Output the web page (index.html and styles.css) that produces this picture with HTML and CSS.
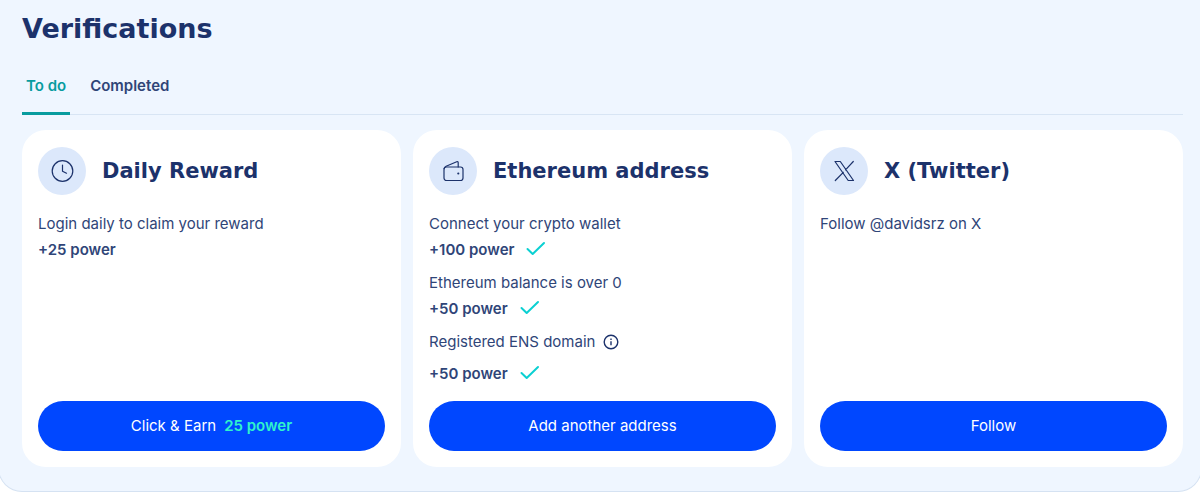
FILE: index.html
```html
<!DOCTYPE html>
<html lang="en">
<head>
<meta charset="utf-8">
<meta name="viewport" content="width=device-width, initial-scale=1">
<title>Verifications</title>
<link rel="stylesheet" href="styles.css">
</head>
<body>
<main class="panel">
  <h1 class="title">Verifications</h1>
  <div class="tabs" role="tablist">
    <button class="tab tab-active" type="button" role="tab" aria-selected="true">To do</button>
    <button class="tab" type="button" role="tab" aria-selected="false">Completed</button>
  </div>
  <div class="cards">
    <section class="card">
      <header class="card-head">
        <span class="badge"><svg width="24" height="24" viewBox="0 0 24 24"><circle cx="12.500" cy="12" r="10.3"/><path d="M12.500 6v6.2l4 2"/></svg></span>
        <h2 class="card-title">Daily Reward</h2>
      </header>
      <div class="steps">
        <div class="step">
          <p class="line">Login daily to claim your reward</p>
          <p class="line power">+25 power</p>
        </div>
      </div>
      <button class="action" type="button">Click &amp; Earn <span class="earn">25 power</span></button>
    </section>

    <section class="card">
      <header class="card-head">
        <span class="badge"><svg width="24" height="24" viewBox="0 0 24 24"><rect x="3" y="8" width="19" height="13.5" rx="2.5"/><path d="M3.100 9.600C3.300 8.200 3.700 7.800 5.100 7.200L15.700 2.800c.9-.3 1.500.1 1.500.9V8"/><circle class="dot" cx="17.300" cy="14.500" r="1.100"/></svg></span>
        <h2 class="card-title">Ethereum address</h2>
      </header>
      <div class="steps">
        <div class="step">
          <p class="line">Connect your crypto wallet</p>
          <p class="line power">+100 power <svg class="check" width="20" height="18" viewBox="0 0 20 18"><path d="M1.500 8l5.200 5L18 2"/></svg></p>
        </div>
        <div class="step">
          <p class="line">Ethereum balance is over 0</p>
          <p class="line power">+50 power <svg class="check" width="20" height="18" viewBox="0 0 20 18"><path d="M1.500 8l5.200 5L18 2"/></svg></p>
        </div>
        <div class="step step-loose">
          <p class="line">Registered ENS domain <svg class="info" width="16" height="16" viewBox="0 0 16 16"><circle cx="8" cy="8" r="6.800"/><path d="M8 7.200v4M8 4.500v1.400"/></svg></p>
          <p class="line power">+50 power <svg class="check" width="20" height="18" viewBox="0 0 20 18"><path d="M1.500 8l5.200 5L18 2"/></svg></p>
        </div>
      </div>
      <button class="action" type="button">Add another address</button>
    </section>

    <section class="card">
      <header class="card-head">
        <span class="badge"><svg width="24" height="24" viewBox="0 0 24 24"><path d="M3 2.500h5.300l13.200 19h-5.300zM21.300 2.500l-7.800 8.300M11.300 13.300L3.300 21.500"/></svg></span>
        <h2 class="card-title">X (Twitter)</h2>
      </header>
      <div class="steps">
        <div class="step">
          <p class="line">Follow @davidsrz on X</p>
        </div>
      </div>
      <button class="action" type="button">Follow</button>
    </section>
  </div>
</main>
</body>
</html>
```
FILE: styles.css
```css
* {
  box-sizing: border-box;
}

body {
  margin: 0;
  background: #fff;
  color: #2f4578;
  font-family: Inter, "Liberation Sans", sans-serif;
  font-size: 15px;
  line-height: 26px;
}

.panel {
  margin: 0 -2px;
  padding: 10px 18px 24px 23px;
  background: #eff6ff;
  border: 1px solid #d5e2f2;
  border-top: 0;
  border-radius: 0 0 24px 24px;
}

.title,
.card-title {
  margin: 0;
  color: #1c326b;
  font-family: "DejaVu Sans", sans-serif;
  font-weight: 700;
}

.title {
  font-size: 27px;
  line-height: 38px;
}

.tabs {
  display: flex;
  gap: 16px;
  margin-top: 8px;
  border-bottom: 1px solid #d8e5f4;
}

.tab {
  margin-bottom: -1px;
  padding: 1px 4px 0;
  height: 59px;
  border: 0;
  border-top: 3px solid transparent;
  border-bottom: 3px solid transparent;
  background: none;
  color: #2f4578;
  font: 600 15px/26px Inter, "Liberation Sans", sans-serif;
  cursor: pointer;
}

.tab-active {
  border-bottom-color: #089c9f;
  color: #089c9f;
}

.cards {
  display: grid;
  grid-template-columns: repeat(3, 1fr);
  gap: 12px;
  margin-top: 15px;
}

.card {
  display: flex;
  flex-direction: column;
  padding: 17px 16px 16px;
  border-radius: 24px;
  background: #fff;
}

.card-head {
  display: flex;
  align-items: center;
  gap: 16px;
}

.badge {
  display: flex;
  flex: none;
  align-items: center;
  justify-content: center;
  width: 48px;
  height: 48px;
  border-radius: 50%;
  background: #dce8fb;
}

.badge svg {
  fill: none;
  stroke: #1c326b;
  stroke-width: 1.2;
  stroke-linecap: round;
  stroke-linejoin: round;
}

.badge .dot {
  fill: #1c326b;
  stroke: none;
}

.card-title {
  font-size: 21px;
  line-height: 28px;
}

.steps {
  display: flex;
  flex: 1;
  flex-direction: column;
  gap: 7px;
  margin: 16px 0 14px;
}

.step-loose {
  display: grid;
  gap: 6px;
}

.line {
  display: flex;
  align-items: center;
  gap: 8px;
  margin: 0;
}

.power {
  gap: 12px;
  font-weight: 600;
}

.check {
  fill: none;
  stroke: #0bd0d2;
  stroke-width: 2;
  stroke-linecap: round;
  stroke-linejoin: round;
}

.info {
  fill: none;
  stroke: #1c326b;
  stroke-width: 1.4;
}

.action {
  display: flex;
  align-items: center;
  justify-content: center;
  gap: 8px;
  height: 50px;
  border: 0;
  border-radius: 25px;
  background: #0047ff;
  color: #fff;
  font: 400 15px/26px Inter, "Liberation Sans", sans-serif;
  cursor: pointer;
}

.earn {
  color: #30f4cb;
  font-weight: 600;
}
```
